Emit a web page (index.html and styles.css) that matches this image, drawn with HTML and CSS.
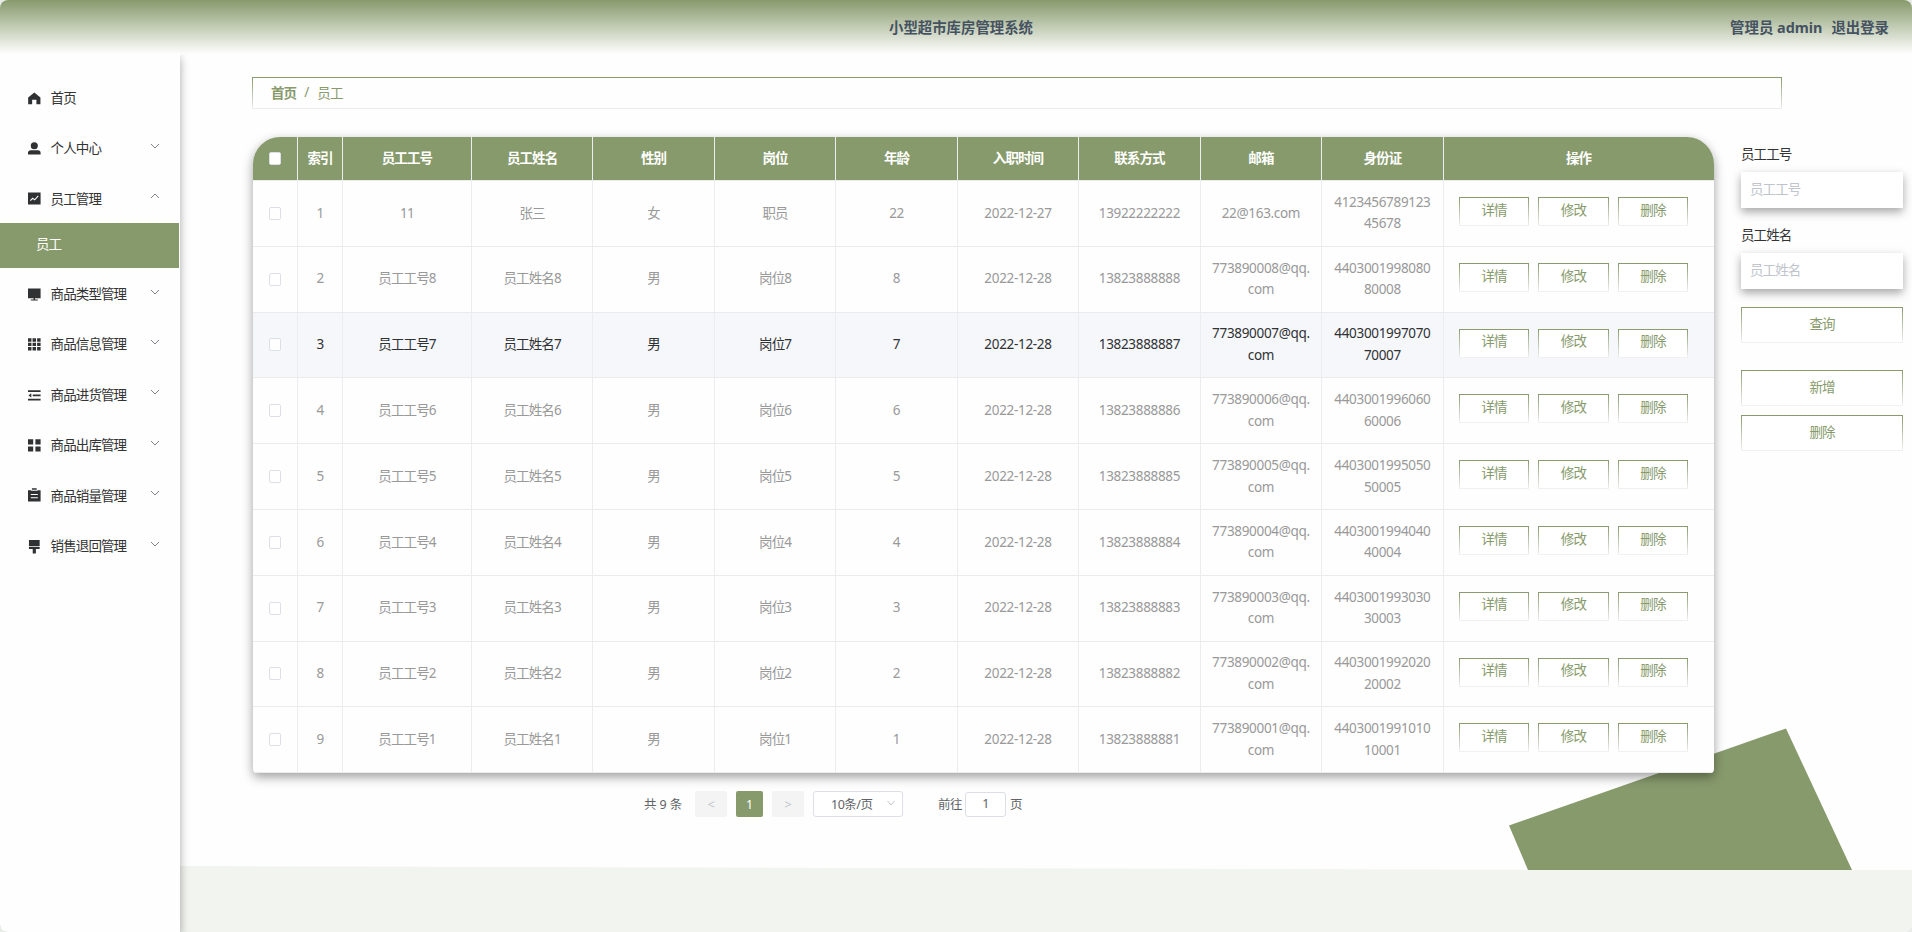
FILE: index.html
```
<!DOCTYPE html>
<html lang="zh-CN">
<head>
    <meta charset="UTF-8">
    <title>小型超市库房管理系统</title>
    <link rel="stylesheet" href="styles.css">
</head>
<body>
<div class="app">
    <svg class="page-bg" viewBox="0 0 1912 932">
        <polygon points="180,866 1490,869.7 1912,870 1912,932 180,932" fill="#f2f4ef"/>
        <polygon points="1509,825.5 1786,728.5 1852,870 1528,870" fill="#879a6c"/>
    </svg>

    <header class="header">
        <h1 class="title">小型超市库房管理系统</h1>
        <div class="user"><span>管理员 admin</span><a class="logout">退出登录</a></div>
    </header>

    <div class="container">
        <aside class="sidebar">
            <ul class="menu" id="menu"></ul>
        </aside>

        <main class="main">
            <div class="breadcrumb"><b>首页</b><span class="sep">/</span><span>员工</span></div>

            <div class="content">
                <div class="list">
                    <table class="table">
                        <thead>
                            <tr>
                                <th><i class="checkbox"></i></th>
                                <th>索引</th>
                                <th>员工工号</th>
                                <th>员工姓名</th>
                                <th>性别</th>
                                <th>岗位</th>
                                <th>年龄</th>
                                <th>入职时间</th>
                                <th>联系方式</th>
                                <th>邮箱</th>
                                <th>身份证</th>
                                <th>操作</th>
                            </tr>
                        </thead>
                        <tbody id="rows"></tbody>
                    </table>

                    <div class="pagination">
                        <span class="total">共 9 条</span>
                        <button class="page-btn" disabled>&lt;</button>
                        <button class="page-btn active">1</button>
                        <button class="page-btn" disabled>&gt;</button>
                        <div class="page-size">
                            <span>10条/页</span>
                            <svg viewBox="0 0 10 10"><path d="M1.5 3 L5 7 L8.5 3"/></svg>
                        </div>
                        <span class="jump">前往</span>
                        <span class="page-input">1</span>
                        <span>页</span>
                    </div>
                </div>

                <form class="search">
                    <label>员工工号</label>
                    <input type="text" placeholder="员工工号">
                    <label>员工姓名</label>
                    <input type="text" placeholder="员工姓名">
                    <button type="button" class="btn query">查询</button>
                    <button type="button" class="btn">新增</button>
                    <button type="button" class="btn">删除</button>
                </form>
            </div>
        </main>
    </div>
</div>

<script>
    // 菜单图标
    const icons = {
        home: '<path d="M8 0.5 L15.8 7 V15.5 H10.7 V10 H5.3 V15.5 H0.2 V7 Z"/>',
        user: '<circle cx="8" cy="4.7" r="4.5"/><path d="M0 16 V13.8 Q0 10.5 3.5 10.5 H12.5 Q16 10.5 16 13.8 V16 Z"/>',
        chart: '<path d="M0 0.5 H16 V16 H0 Z"/><path class="line" d="M3 11 L6 8 L8.5 10 L13 5"/>',
        monitor: '<path d="M0 0.5 H16 V13 H0 Z M7 13 H9 V14.5 H12.5 V16 H3.5 V14.5 H7 Z"/>',
        grid: '<path d="M0 0.3h4.4v4.4h-4.4z M5.8 0.3h4.4v4.4h-4.4z M11.6 0.3h4.4v4.4h-4.4z M0 5.9h4.4v4.4h-4.4z M5.8 5.9h4.4v4.4h-4.4z M11.6 5.9h4.4v4.4h-4.4z M0 11.5h4.4v4.4h-4.4z M5.8 11.5h4.4v4.4h-4.4z M11.6 11.5h4.4v4.4h-4.4z"/>',
        fold: '<path d="M0 1.5h16v2.2h-16z M6 7h10v2.2h-10z M0 12.5h16v2.2h-16z M0.5 8.1 L4.2 5.5 V10.7 Z"/>',
        menu: '<path d="M0 0.3h6.6v6.6h-6.6z M9.4 0.3h6.6v6.6h-6.6z M0 9.4h6.6v6.6h-6.6z M9.4 9.4h6.6v6.6h-6.6z"/>',
        order: '<path d="M5 -1 H11 V1.5 H16 V16 H0 V1.5 H5 Z"/><path class="line" d="M4 1.5 H12 M3.5 7 H12.5 M3.5 11 H12.5"/>',
        brush: '<path d="M1.2 0 H14.8 V8 H1.2 Z M1.2 9 H14.8 V11.5 H10 V17 H6 V11.5 H1.2 Z"/>'
    };

    const menus = [
        ['home', '首页'],
        ['user', '个人中心', 'down'],
        ['chart', '员工管理', 'up', '员工'],
        ['monitor', '商品类型管理', 'down'],
        ['grid', '商品信息管理', 'down'],
        ['fold', '商品进货管理', 'down'],
        ['menu', '商品出库管理', 'down'],
        ['order', '商品销量管理', 'down'],
        ['brush', '销售退回管理', 'down']
    ];

    document.getElementById('menu').innerHTML = menus.map(([icon, name, arrow, sub]) => `
        <li class="menu-item">
            <svg class="icon" viewBox="0 0 16 16">${icons[icon]}</svg>
            <span>${name}</span>
            ${arrow ? `<svg class="arrow ${arrow}" viewBox="0 0 10 6"><path d="M1 1 L5 5 L9 1"/></svg>` : ''}
        </li>
        ${sub ? `<li class="submenu">${sub}</li>` : ''}`).join('');

    // 员工数据
    const rows = [['11', '张三', '女', '职员', '22', '2022-12-27', '13922222222', '22@163.com', '4123456789123<br>45678']];
    for (let i = 8; i > 0; i--) {
        rows.push([`员工工号${i}`, `员工姓名${i}`, '男', `岗位${i}`, i, '2022-12-28', `1382388888${i}`,
            `77389000${i}@qq.<br>com`, `440300199${i}0${i}0<br>${i}000${i}`]);
    }

    document.getElementById('rows').innerHTML = rows.map((row, i) => `
        <tr class="${i === 2 ? 'hover' : ''}">
            <td><i class="checkbox"></i></td>
            <td>${i + 1}</td>
            ${row.map((text, n) => `<td class="${n > 3 ? 'num' : ''}"><span>${text}</span></td>`).join('')}
            <td class="actions">
                <button class="btn">详情</button>
                <button class="btn">修改</button>
                <button class="btn">删除</button>
            </td>
        </tr>`).join('');
</script>
</body>
</html>
```
FILE: styles.css
```
* {
    box-sizing: border-box;
}

html {
    background: #e9ebe9;
}

body {
    margin: 0;
    font-family: "Noto Sans", "Noto Sans CJK SC", sans-serif;
    font-size: 13.5px;
    letter-spacing: -0.9px;
    color: #333;
}

.app {
    position: relative;
    height: 932px;
    overflow: hidden;
    background: #fefefe;
    border-radius: 8px;
    display: flex;
    flex-direction: column;
}

.page-bg {
    position: absolute;
    left: 0;
    top: 0;
    width: 1912px;
    height: 932px;
}

/* 顶部 */
.header {
    position: relative;
    height: 54px;
    flex: none;
    display: grid;
    grid-template-columns: 1fr auto 1fr;
    align-items: center;
    padding: 0 23px 2px 33px;
    background: linear-gradient(180deg, #879a6c, #fefefe);
    color: #455261;
    font-size: 14.4px;
    font-weight: bold;
    letter-spacing: 0;
}

.title {
    grid-column: 2;
    margin: 0;
    font-size: 14.4px;
}

.user {
    display: flex;
    justify-content: flex-end;
    gap: 9px;
}

.container {
    position: relative;
    flex: 1;
    display: flex;
}

/* 侧边菜单 */
.sidebar {
    width: 180px;
    flex: none;
    background: #fefefe;
    box-shadow: 0 4px 9px rgba(0, 0, 0, 0.35);
    clip-path: inset(0 -20px 0 0);
}

.menu {
    list-style: none;
    margin: 0;
    padding: 18.2px 0 0;
}

.menu-item {
    display: flex;
    align-items: center;
    height: 50.4px;
    padding: 0 20px 0 28px;
}

.menu-item span {
    margin-top: -1px;
}

.icon {
    width: 12.6px;
    height: 12.6px;
    margin: 1px 10px 0 0;
    fill: #303133;
    overflow: visible;
}

.icon .line {
    fill: none;
    stroke: #fff;
    stroke-width: 1.3;
}

.arrow {
    width: 10px;
    height: 6px;
    margin: -4px 0 0 auto;
    fill: none;
    stroke: #808389;
}

.arrow.up {
    transform: rotate(180deg);
}

.submenu {
    width: 179px;
    height: 45px;
    line-height: 43px;
    padding-left: 36px;
    background: #879a6c;
    color: #fff;
}

/* 主体 */
.main {
    flex: 1;
    padding: 23px 9px 0 72px;
}

.breadcrumb {
    width: 1530px;
    height: 32px;
    padding: 0 0 2px 18px;
    display: flex;
    align-items: center;
    border: 1px solid;
    border-image: linear-gradient(#879a6c, #eee) 1;
    color: #879a6c;
}

.breadcrumb b {
    font-weight: 600;
}

.sep {
    margin: 0 9px 0 8px;
}

.content {
    display: flex;
    justify-content: space-between;
    margin-top: 28px;
}

.list {
    width: 1461.5px;
}

.table {
    display: block;
    margin-left: 1px;
    overflow: hidden;
    background: #fefefe;
    border-radius: 27px 27px 4px 4px;
    box-shadow: 0 4px 11px rgba(0, 0, 0, 0.38);
}

.table thead,
.table tbody {
    display: block;
}

.table tr {
    display: grid;
    grid-template-columns: 45px 45px 128.9px repeat(8, 121.48px) 1fr;
    height: 65.8px;
    color: #999;
}

.table thead tr {
    height: 44px;
    background: #879a6c;
    color: #fff;
}

.table tr.hover {
    background: #f5f7fa;
    color: #303133;
}

.table th,
.table td {
    display: flex;
    align-items: center;
    justify-content: center;
    padding: 0;
    text-align: center;
    line-height: 21.6px;
    border-right: 1px solid #ebeef0;
    border-bottom: 1px solid #ebebeb;
}

.table th:last-child,
.table td:last-child {
    border-right: 0;
}

.table td.num {
    letter-spacing: -0.32px;
}

.checkbox {
    width: 12px;
    height: 13px;
    background: #fff;
    border: 1px solid #dcdfe6;
    border-radius: 2px;
}

.btn {
    height: 36px;
    padding: 0 0 4px;
    background: #fff;
    border: 1px solid;
    border-image: linear-gradient(#879a6c, #f2f2f2) 1;
    color: #879a6c;
    font: inherit;
    letter-spacing: inherit;
}

.table td.actions {
    align-items: flex-start;
    justify-content: flex-start;
    gap: 9px;
    padding: 16px 0 0 15px;
}

.actions .btn {
    width: 70.5px;
    height: 29px;
    padding-bottom: 2px;
}

/* 分页 */
.pagination {
    display: flex;
    align-items: center;
    height: 26px;
    margin: 18px 0 0 392px;
    font-size: 12.5px;
    letter-spacing: -0.5px;
    color: #606266;
}

.pagination > span {
    position: relative;
    top: -1px;
}

.total {
    width: 51px;
    word-spacing: 0.8px;
}

.page-btn {
    width: 32px;
    height: 26px;
    margin-right: 9px;
    padding: 0;
    border: 0;
    border-radius: 2px;
    background: #f4f4f5;
    color: #c0c4cc;
    font: inherit;
}

.page-btn.active {
    width: 27px;
    background: #879a6c;
    color: #fff;
}

.page-size {
    display: flex;
    align-items: center;
    justify-content: space-between;
    width: 90px;
    height: 26px;
    padding: 0 6px 2px 17px;
    background: #fff;
    border: 1px solid #dcdfe6;
    border-radius: 3px;
}

.page-size svg {
    width: 10px;
    height: 10px;
    fill: none;
    stroke: #c0c4cc;
}

.jump {
    margin-left: 35px;
}

.pagination .page-input {
    top: 0;
    width: 41px;
    height: 25px;
    margin: 1px 4px 0 3px;
    line-height: 22px;
    text-align: center;
    background: #fff;
    border: 1px solid #dcdfe6;
    border-radius: 3px;
}

/* 查询 */
.search {
    display: flex;
    flex-direction: column;
    width: 162px;
    padding-top: 8px;
}

.search label {
    height: 27px;
    line-height: 18px;
}

.search input {
    height: 36px;
    margin-bottom: 18px;
    padding: 0 9px 2px;
    border: 0;
    background: #fff;
    box-shadow: 0 4px 9px rgba(0, 0, 0, 0.35);
    font: inherit;
    letter-spacing: inherit;
}

.search input::placeholder {
    color: #c0c4cc;
}

.search .btn {
    margin-bottom: 9px;
}

.search .query {
    margin-bottom: 27px;
}
```
